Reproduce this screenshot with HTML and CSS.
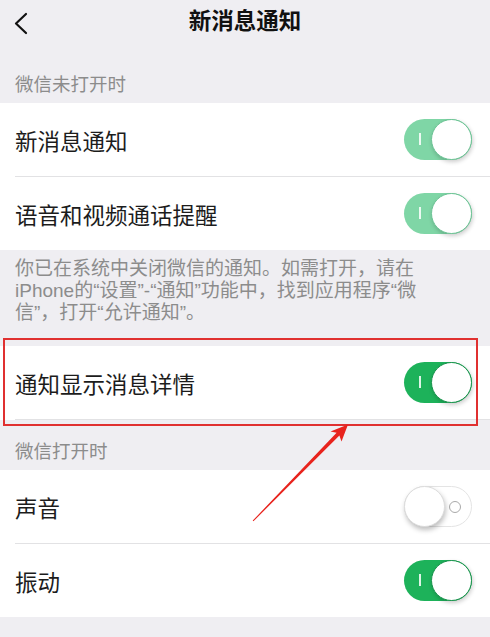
FILE: index.html
```html
<!DOCTYPE html>
<html lang="zh-CN">
<head>
    <meta charset="UTF-8">
    <meta name="viewport" content="width=device-width, initial-scale=1.0">
    <title>新消息通知</title>
    <link rel="stylesheet" href="styles.css">
</head>
<body>
<div class="page">
    <div class="nav">
        <svg class="back" width="16" height="24" viewBox="0 0 16 24">
            <path d="M13 3 L3 12.5 L13 22" fill="none" stroke="#111" stroke-width="2.2" stroke-linecap="round" stroke-linejoin="round"/>
        </svg>
        <div class="nav-title">新消息通知</div>
    </div>

    <div class="group-title">微信未打开时</div>
    <div class="group">
        <div class="cell">
            <span class="cell-label">新消息通知</span>
            <span class="switch dim"></span>
        </div>
        <div class="cell">
            <span class="cell-label">语音和视频通话提醒</span>
            <span class="switch dim"></span>
        </div>
    </div>
    <div class="group-tip">你已在系统中关闭微信的通知。如需打开，请在iPhone的“设置”-“通知”功能中，找到应用程序“微信”，打开“允许通知”。</div>

    <div class="group marked">
        <div class="cell">
            <span class="cell-label">通知显示消息详情</span>
            <span class="switch"></span>
        </div>
        <div class="mark-box"></div>
    </div>

    <div class="group-title second">微信打开时</div>
    <div class="group">
        <div class="cell">
            <span class="cell-label">声音</span>
            <span class="switch off"></span>
        </div>
        <div class="cell">
            <span class="cell-label">振动</span>
            <span class="switch"></span>
        </div>
    </div>

    <!-- red annotation arrow -->
    <svg class="arrow" width="490" height="637" viewBox="0 0 490 637">
        <polygon points="253.4,521.3 339.4,435.6 341.5,441.5 348,424.5 330.5,431.5 336.6,432.8 252.7,520.6" fill="#e8231d"/>
    </svg>
</div>
</body>
</html>
```

FILE: styles.css
```css
body {
    margin: 0;
    background-color: #efeef2;
    font-family: "Liberation Sans", "Noto Sans CJK SC", sans-serif;
    color: #1c1c1c;
}

.page {
    position: relative;
    width: 490px;
    height: 637px;
    overflow: hidden;
}

.nav {
    height: 53px;
    display: flex;
    justify-content: center;
    position: relative;
}

.back {
    position: absolute;
    left: 13px;
    top: 11px;
}

.nav-title {
    font-size: 22.5px;
    font-weight: bold;
    line-height: 44px;
    color: #111;
}

.group-title {
    height: 24px;
    padding: 20px 15px 6px;
    font-size: 18.5px;
    line-height: 24px;
    color: #8c8c8c;
}

.group-title.second {
    padding-top: 20px;
}

.group {
    background: white;
}

.group.marked {
    position: relative;
    margin-top: 0;
}

.cell {
    display: flex;
    align-items: center;
    justify-content: space-between;
    height: 73px;
    margin-left: 15px;
    padding-right: 18px;
    border-bottom: 1px solid #e2e2e4;
}

.cell:last-child {
    border-bottom: none;
}

.cell-label {
    font-size: 22.5px;
}

.group-tip {
    padding: 8px 40px 22px 15px;
    font-size: 19px;
    line-height: 22px;
    color: #8c8c8c;
}

.switch {
    position: relative;
    width: 68px;
    height: 41px;
    border-radius: 21px;
    background: #1db25a;
    box-sizing: border-box;
}

.switch::before {
    content: "";
    position: absolute;
    left: 15px;
    top: 14px;
    width: 1.5px;
    height: 12px;
    background: rgba(255, 255, 255, 0.85);
}

.switch::after {
    content: "";
    position: absolute;
    right: 0;
    top: 0;
    width: 41px;
    height: 41px;
    box-sizing: border-box;
    border-radius: 50%;
    background: white;
    border: 1.5px solid #17934b;
    box-shadow: 1px 2px 4px rgba(0, 0, 0, 0.2);
}

.switch.dim {
    background: #7fd6a6;
}

.switch.dim::after {
    border-color: #6cc495;
}

.switch.off {
    background: white;
    border: 1.5px solid #e4e4e4;
}

.switch.off::before {
    left: auto;
    right: 10px;
    top: 14px;
    width: 10px;
    height: 10px;
    border-radius: 50%;
    background: none;
    border: 1.5px solid #a9a9a9;
}

.switch.off::after {
    left: -1.5px;
    top: -1.5px;
    right: auto;
    border-color: #dcdcdc;
    box-shadow: 1px 3px 5px rgba(0, 0, 0, 0.25);
}

.mark-box {
    position: absolute;
    left: 3px;
    right: 12px;
    top: -8px;
    bottom: -6px;
    border: 2px solid #e03030;
}

.arrow {
    position: absolute;
    left: 0;
    top: 0;
    pointer-events: none;
}
```
